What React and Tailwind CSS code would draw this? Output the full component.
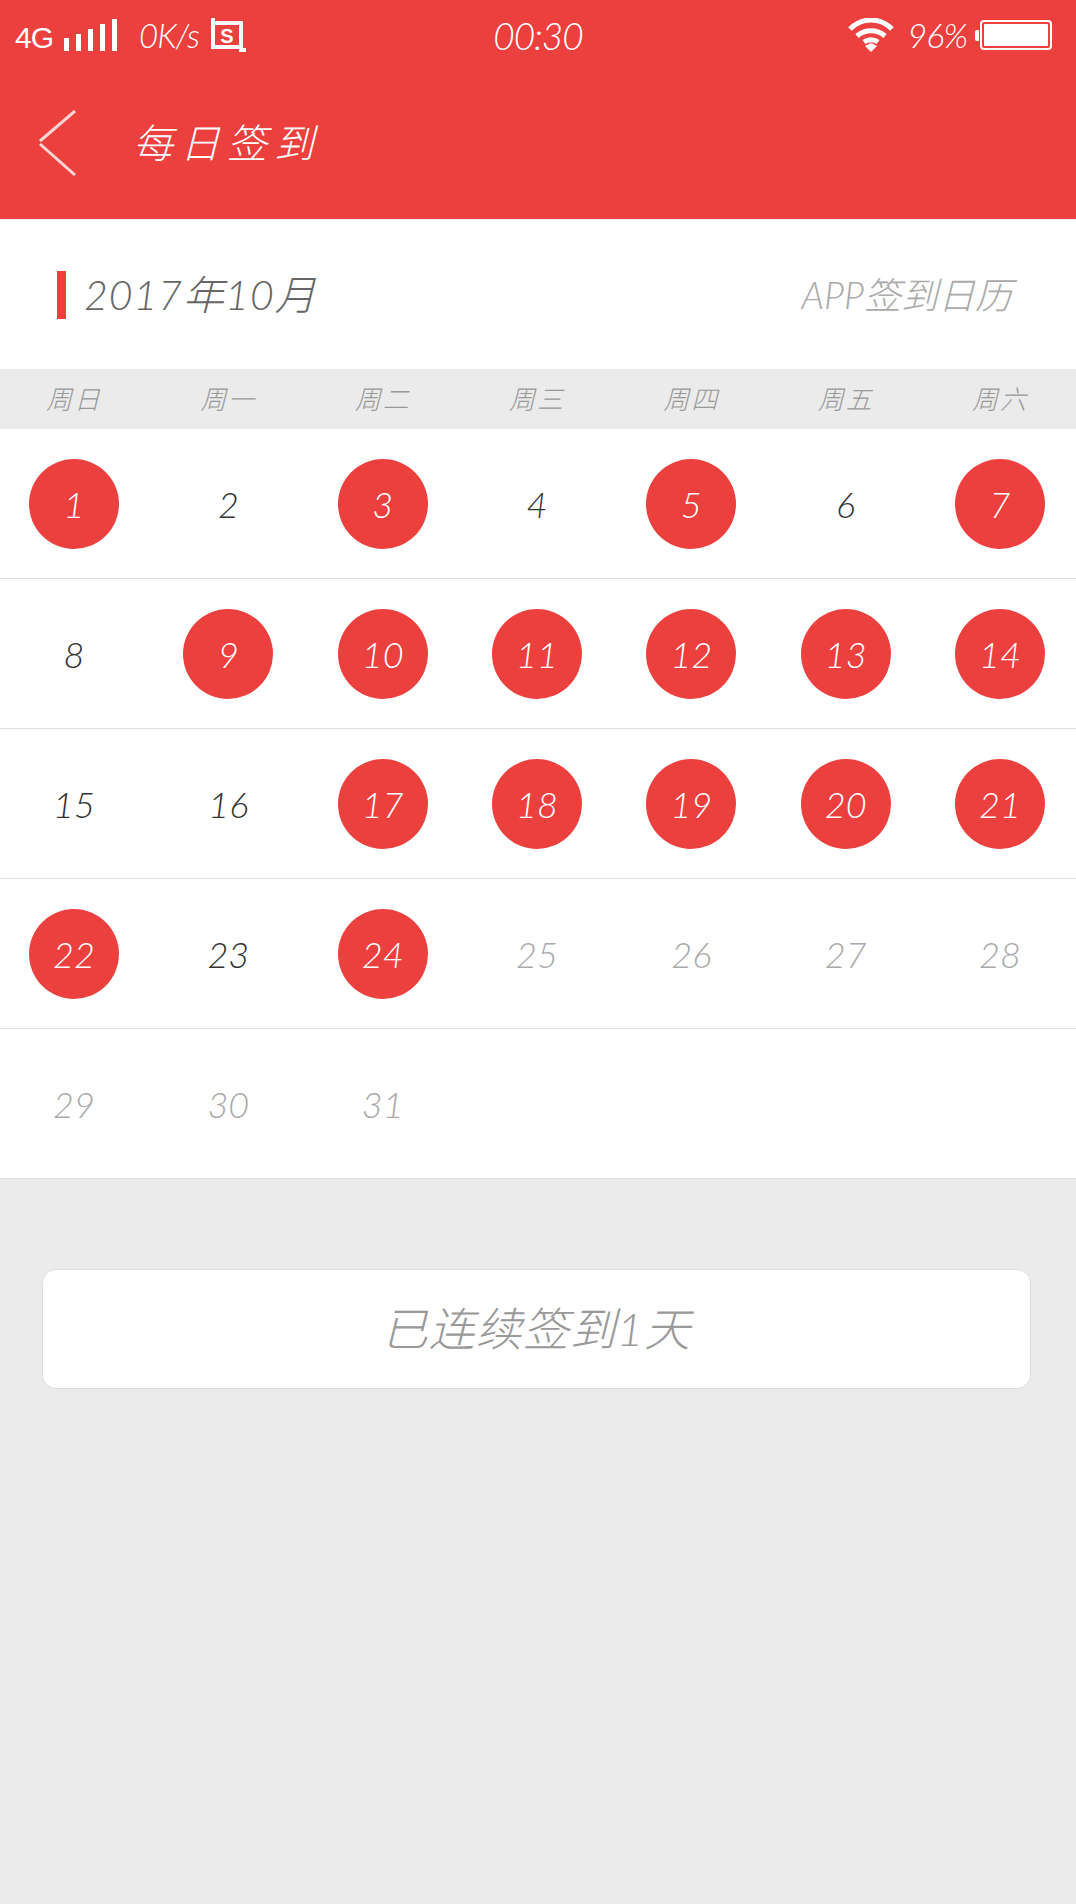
const weekdays = ['周日', '周一', '周二', '周三', '周四', '周五', '周六'];

// 'on' = signed, 'past' = missed, 'future' = not reached yet
const weeks = [
  [[1, 'on'], [2, 'past'], [3, 'on'], [4, 'past'], [5, 'on'], [6, 'past'], [7, 'on']],
  [[8, 'past'], [9, 'on'], [10, 'on'], [11, 'on'], [12, 'on'], [13, 'on'], [14, 'on']],
  [[15, 'past'], [16, 'past'], [17, 'on'], [18, 'on'], [19, 'on'], [20, 'on'], [21, 'on']],
  [[22, 'on'], [23, 'past'], [24, 'on'], [25, 'future'], [26, 'future'], [27, 'future'], [28, 'future']],
  [[29, 'future'], [30, 'future'], [31, 'future'], [null], [null], [null], [null]],
];

const dayStyles = {
  on: 'bg-[#ec403f] text-white',
  past: 'text-[#333333]',
  future: 'text-[#aaaaaa]',
};

const latin = "font-['Lato','Noto_Sans_CJK_SC',sans-serif] italic font-light";

function StatusBar() {
  return (
    <div className="grid h-[70px] grid-cols-[1fr_auto_1fr] items-center text-white">
      <div className="flex items-center pl-[15px]">
        <span className="mt-[5px] font-['Liberation_Sans',sans-serif] text-[30px] leading-none tracking-[-1px]">4G</span>
        <div className="ml-[11px] mt-[-1px] flex h-[32px] items-end gap-[7px]">
          <div className="h-[13px] w-[5px] bg-white" />
          <div className="h-[17px] w-[5px] bg-white" />
          <div className="h-[22px] w-[5px] bg-white" />
          <div className="h-[27px] w-[5px] bg-white" />
          <div className="h-[32px] w-[5px] bg-white" />
        </div>
        <span className={`${latin} ml-[22px] text-[33px] leading-none tracking-[-1px]`}>0K/s</span>
        <svg className="ml-[10px]" width="38" height="36" viewBox="0 0 38 36" fill="none">
          <path d="M4 1v5h28v27h5M4 6v24h28" stroke="#fff" strokeWidth="4" />
          <text x="18" y="26" textAnchor="middle" fontSize="20" fontWeight="700" fill="#fff" fontFamily="Liberation Sans">S</text>
        </svg>
      </div>
      <span className={`${latin} text-[37px] leading-none tracking-[-1px]`}>00:30</span>
      <div className="flex items-center justify-end pr-[24px]">
        <svg width="46" height="34" viewBox="0 0 46 34" fill="none" stroke="#fff" strokeWidth="5">
          <path d="M2 11C14-1 32-1 44 11" />
          <path d="M9 18c8-7 20-7 28 0" />
          <path d="M16 24c4-3 10-3 14 0" />
          <path d="M17 28l6-3 6 3-6 6z" fill="#fff" stroke="none" />
        </svg>
        <span className={`${latin} ml-[14px] text-[34px] leading-none tracking-[-1px]`}>96%</span>
        <div className="ml-[8px] h-[11px] w-[4px] rounded-l-[2px] bg-white" />
        <div className="ml-[1px] h-[30px] w-[72px] rounded-[4px] border-2 border-white p-[2px]">
          <div className="h-full w-full rounded-[1px] bg-white" />
        </div>
      </div>
    </div>
  );
}

function NavBar() {
  return (
    <div className="flex h-[149px] items-center pb-[4px]">
      <svg className="ml-[38px]" width="38" height="66" viewBox="0 0 38 66" fill="none">
        <path d="M37 1L2 31" stroke="#f8d4d3" strokeWidth="3" />
        <path d="M2 34L37 65" stroke="#f8d4d3" strokeWidth="3" />
      </svg>
      <span className={`${latin} ml-[57px] text-[40px] leading-none tracking-[7px] text-white`}>每日签到</span>
    </div>
  );
}

function Day({ value, status }) {
  if (value === null) return <div className="h-[90px] w-[90px]" />;
  return (
    <div className={`flex h-[90px] w-[90px] items-center justify-center rounded-full ${latin} text-[36px] ${dayStyles[status]}`}>
      {value}
    </div>
  );
}

export default function App() {
  return (
    <div className="min-h-[1904px] bg-[#ebebeb]">
      <header className="bg-[#ec403f]">
        <StatusBar />
        <NavBar />
      </header>

      <div className="flex h-[150px] items-center justify-between border-t border-[#eeeeee] bg-white pl-[57px] pr-[64px]">
        <div className="flex items-center">
          <div className="h-[48px] w-[9px] bg-[#ec403f]" />
          <span className={`${latin} ml-[18px] text-[41px] leading-none tracking-[1px] text-[#666666]`}>2017年10月</span>
        </div>
        <span className={`${latin} text-[37px] leading-none text-[#aaaaaa]`}>APP签到日历</span>
      </div>

      <div className="flex h-[60px] items-center justify-between pl-[29px] pr-[31px]">
        {weekdays.map((name) => (
          <div key={name} className={`w-[90px] text-center ${latin} text-[26px] leading-none tracking-[2px] text-[#999999]`}>
            {name}
          </div>
        ))}
      </div>

      <div className="bg-white">
        {weeks.map((week, i) => (
          <div key={i} className="flex h-[150px] items-center justify-between border-b border-[#dddddd] pl-[29px] pr-[31px]">
            {week.map(([value, status], j) => (
              <Day key={j} value={value} status={status} />
            ))}
          </div>
        ))}
      </div>

      <div className="ml-[42px] mr-[45px] mt-[90px] flex h-[120px] items-center justify-center rounded-[14px] border border-[#dddddd] bg-white">
        <span className={`${latin} text-[46px] leading-none tracking-[1px] text-[#999999]`}>已连续签到1天</span>
      </div>
    </div>
  );
}
